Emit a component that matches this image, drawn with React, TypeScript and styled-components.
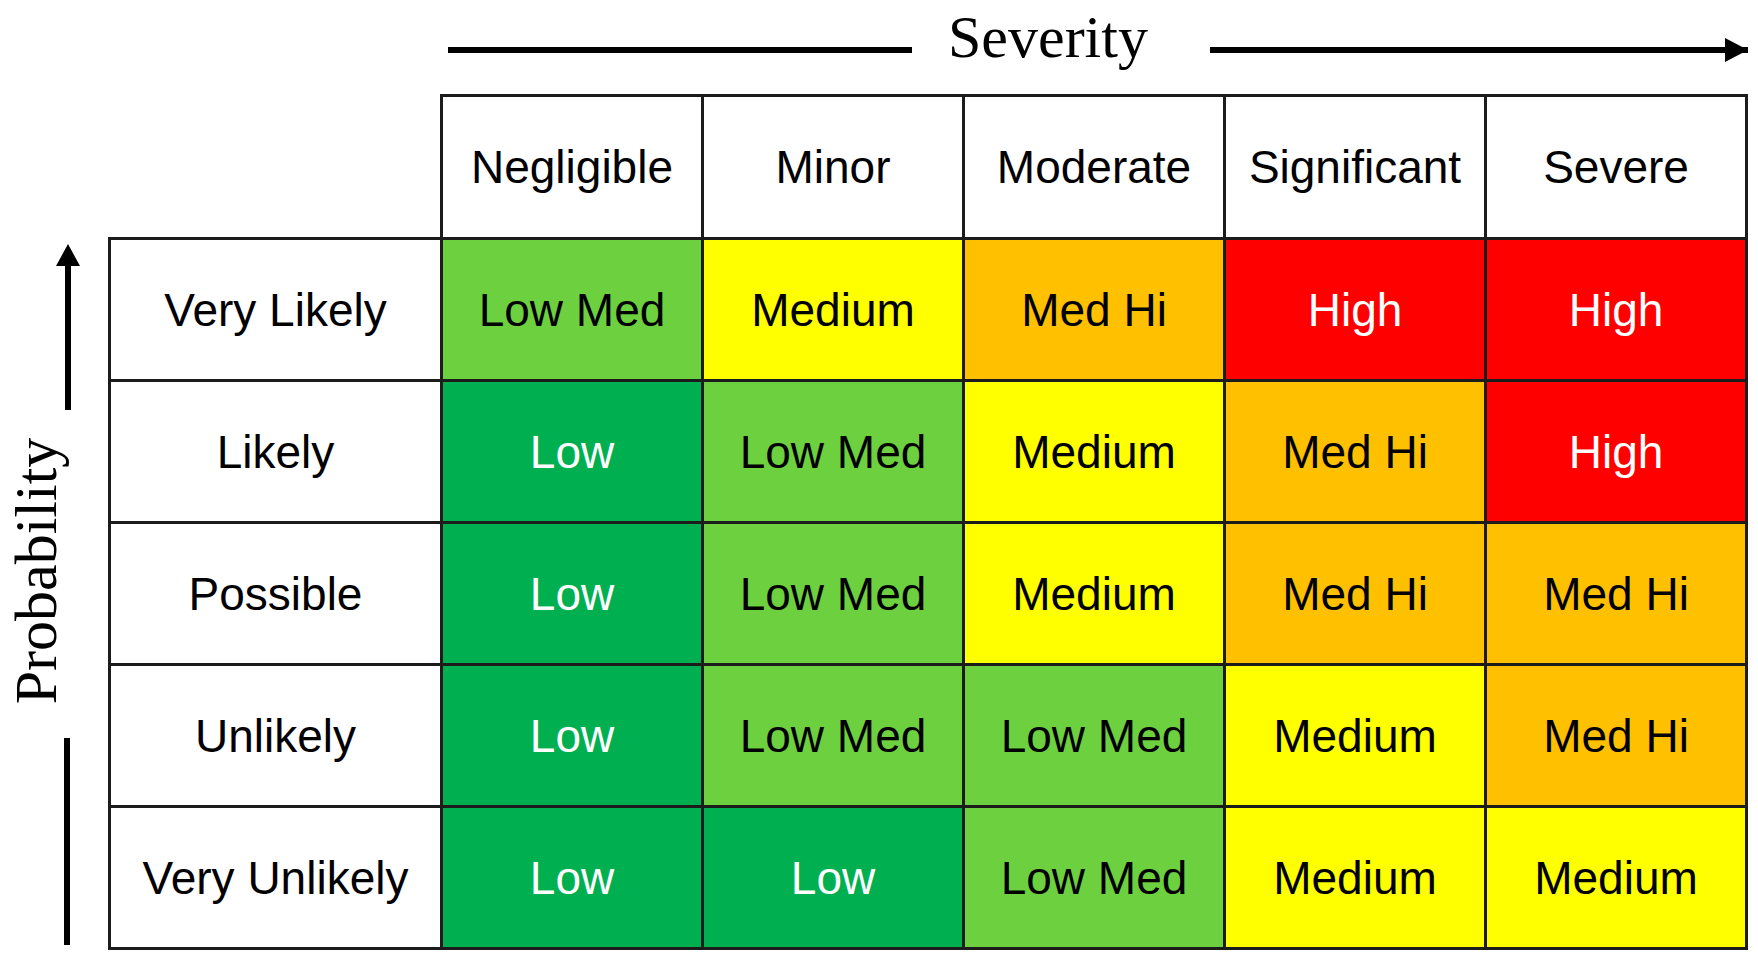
import * as React from 'react'
import styled, { createGlobalStyle } from 'styled-components'

type Level = 'low' | 'lowMed' | 'medium' | 'medHi' | 'high'

const LEVELS: Record<Level, { bg: string; fg: string; label: string }> = {
  low: { bg: '#00b050', fg: '#ffffff', label: 'Low' },
  lowMed: { bg: '#6dd13f', fg: '#000000', label: 'Low Med' },
  medium: { bg: '#ffff00', fg: '#000000', label: 'Medium' },
  medHi: { bg: '#ffc000', fg: '#000000', label: 'Med Hi' },
  high: { bg: '#ff0000', fg: '#ffffff', label: 'High' },
}

const SEVERITIES = ['Negligible', 'Minor', 'Moderate', 'Significant', 'Severe']

const ROWS: { label: string; cells: Level[] }[] = [
  { label: 'Very Likely', cells: ['lowMed', 'medium', 'medHi', 'high', 'high'] },
  { label: 'Likely', cells: ['low', 'lowMed', 'medium', 'medHi', 'high'] },
  { label: 'Possible', cells: ['low', 'lowMed', 'medium', 'medHi', 'medHi'] },
  { label: 'Unlikely', cells: ['low', 'lowMed', 'lowMed', 'medium', 'medHi'] },
  { label: 'Very Unlikely', cells: ['low', 'low', 'lowMed', 'medium', 'medium'] },
]

const GlobalStyle = createGlobalStyle`
  html, body {
    margin: 0;
    padding: 0;
    background: #ffffff;
  }

  body {
    font-family: "Liberation Sans", Arial, sans-serif;
    color: #000;
  }
`

const Page = styled.div`
  display: grid;
  grid-template-columns: 108px auto;
  grid-template-rows: 94px auto;
  width: 1758px;
`

const SeverityAxis = styled.div`
  grid-column: 1 / -1;
  display: flex;
  align-items: flex-start;
  padding: 0 10px 0 448px;
`

const AxisLine = styled.div<{ $width: number }>`
  width: ${(p) => p.$width}px;
  height: 6px;
  margin-top: 47px;
  background: #000;
`

const AxisTitle = styled.div`
  margin: 7px 62px 0 36px;
  font-family: "Liberation Serif", "Times New Roman", serif;
  font-size: 60px;
  line-height: 1;
  white-space: nowrap;
`

const ArrowRight = styled.div`
  position: relative;
  flex: 1;
  height: 6px;
  margin-top: 47px;
  background: #000;

  &::after {
    content: '';
    position: absolute;
    right: 0;
    top: 50%;
    transform: translateY(-50%);
    border-left: 23px solid #000;
    border-top: 12px solid transparent;
    border-bottom: 12px solid transparent;
  }
`

const ProbabilityAxis = styled.div`
  display: flex;
  flex-direction: column;
  align-items: flex-start;
  padding-top: 150px;
`

const ArrowUp = styled.div`
  position: relative;
  width: 6px;
  height: 144px;
  margin: 22px 0 0 65px;
  background: #000;

  &::before {
    content: '';
    position: absolute;
    left: 50%;
    top: -22px;
    transform: translateX(-50%);
    border-bottom: 22px solid #000;
    border-left: 12px solid transparent;
    border-right: 12px solid transparent;
  }
`

const VerticalTitleBox = styled.div`
  display: flex;
  align-items: center;
  justify-content: center;
  width: 72px;
  height: 322px;
  padding-bottom: 6px;
`

const VerticalTitle = styled(AxisTitle)`
  margin: 0;
  transform: rotate(-90deg);
`

const AxisTail = styled.div`
  width: 6px;
  height: 207px;
  margin-left: 64px;
  background: #000;
`

const Matrix = styled.table`
  border-collapse: collapse;
  table-layout: fixed;
  width: 1637px;
`

const Row = styled.tr<{ $height: number }>`
  height: ${(p) => p.$height}px;
`

const BaseCell = styled.td`
  padding: 0;
  border: 3px solid #1c1c1c;
  text-align: center;
  vertical-align: middle;
  font-size: 46px;
  line-height: 1;
  white-space: nowrap;
`

const CornerCell = styled.td`
  padding: 0;
  border: none;
`

const HeadCell = styled(BaseCell).attrs({ as: 'th' })`
  font-weight: normal;
  background: #ffffff;
`

const RowLabel = styled(BaseCell)`
  background: #ffffff;
`

const RiskCell = styled(BaseCell)<{ $level: Level }>`
  background: ${(p) => LEVELS[p.$level].bg};
  color: ${(p) => LEVELS[p.$level].fg};
`

const App = () => {
  return (
    <>
      <GlobalStyle />
      <Page>
        <SeverityAxis>
          <AxisLine $width={464} />
          <AxisTitle>Severity</AxisTitle>
          <ArrowRight />
        </SeverityAxis>

        <ProbabilityAxis>
          <ArrowUp />
          <VerticalTitleBox>
            <VerticalTitle>Probability</VerticalTitle>
          </VerticalTitleBox>
          <AxisTail />
        </ProbabilityAxis>

        <Matrix>
          <colgroup>
            <col style={{ width: 332 }} />
            {SEVERITIES.map((s) => (
              <col key={s} style={{ width: 261 }} />
            ))}
          </colgroup>
          <thead>
            <Row $height={143}>
              <CornerCell />
              {SEVERITIES.map((s) => (
                <HeadCell key={s}>{s}</HeadCell>
              ))}
            </Row>
          </thead>
          <tbody>
            {ROWS.map((row) => (
              <Row $height={142} key={row.label}>
                <RowLabel>{row.label}</RowLabel>
                {row.cells.map((level, i) => (
                  <RiskCell key={i} $level={level}>
                    {LEVELS[level].label}
                  </RiskCell>
                ))}
              </Row>
            ))}
          </tbody>
        </Matrix>
      </Page>
    </>
  )
}

export default App
